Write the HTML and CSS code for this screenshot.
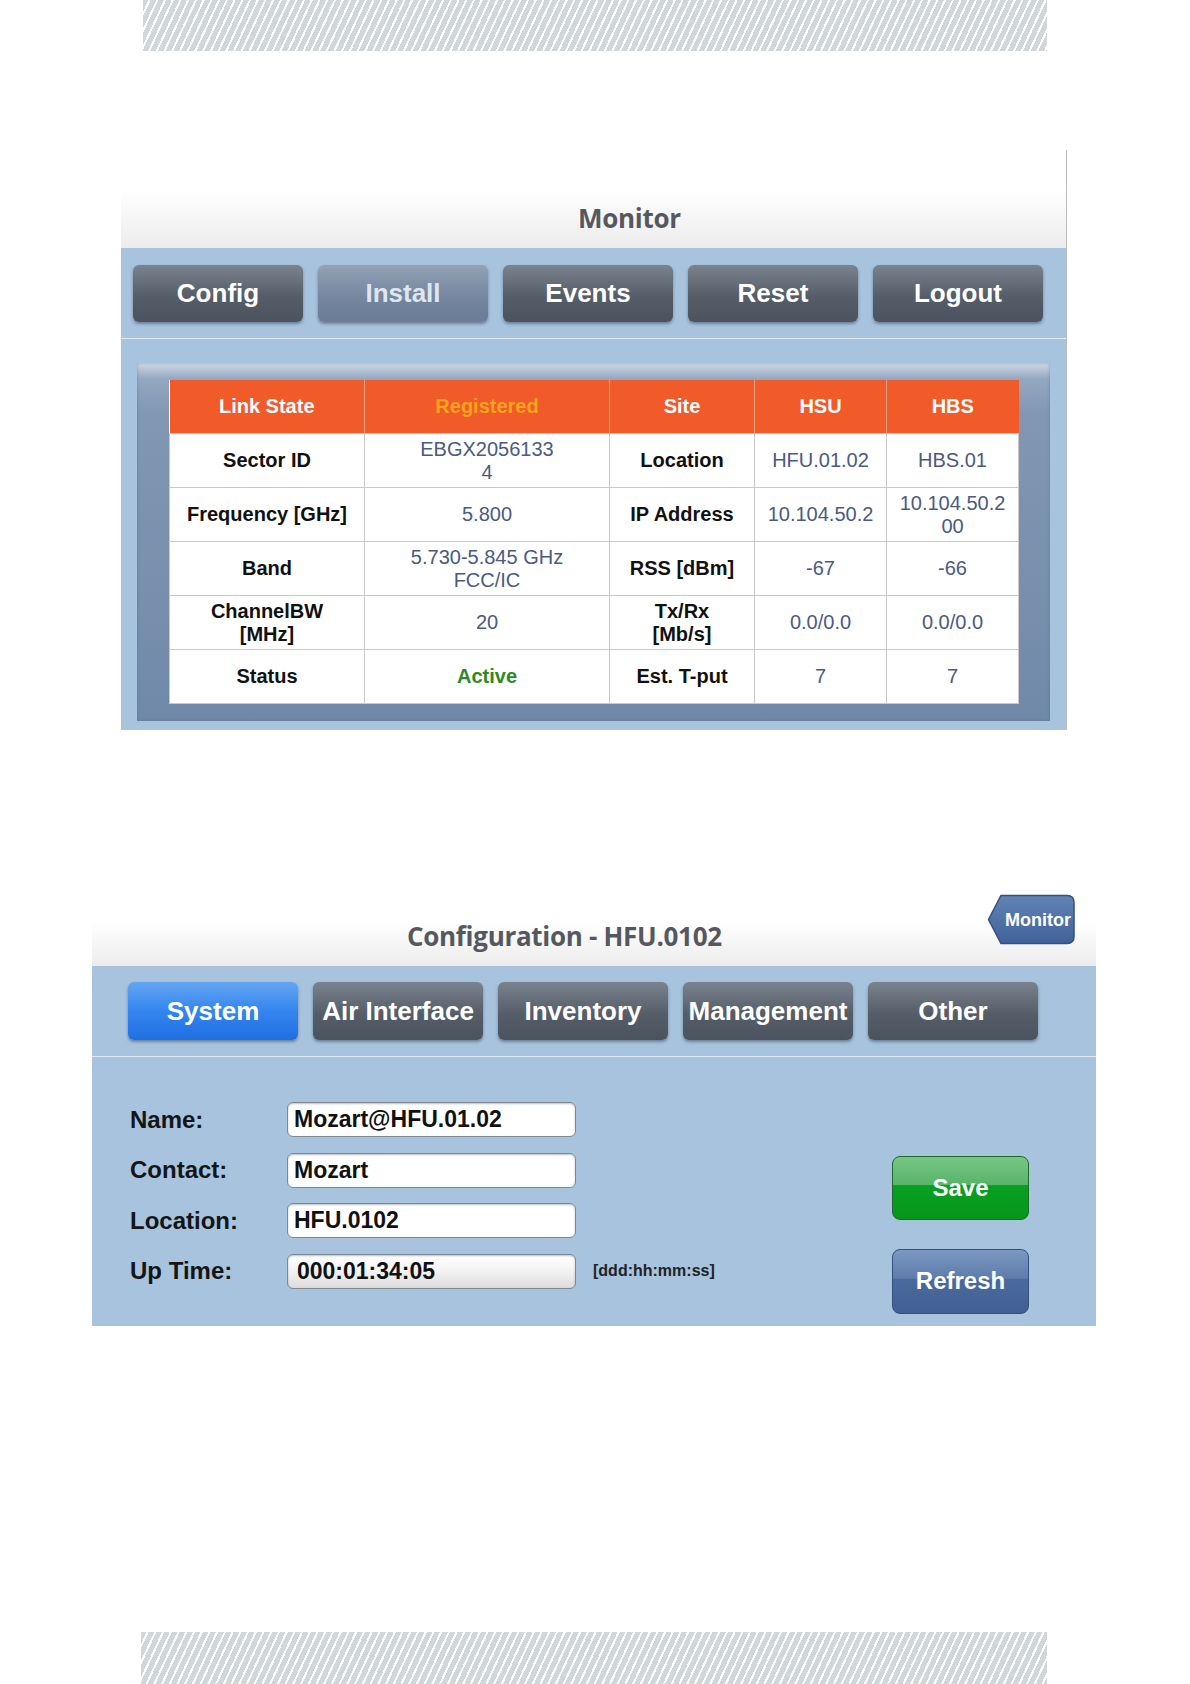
FILE: index.html
```html
<!DOCTYPE html>
<html lang="en">

<head>
  <meta charset="UTF-8">
  <meta name="viewport" content="width=device-width, initial-scale=1.0">
  <link rel="stylesheet" href="styles.css">
  <title>Monitor / Configuration</title>
</head>

<body>
  <div class="stripe top"></div>

  <section class="panel monitor">
    <header class="panel-head">
      <h1>Monitor</h1>
    </header>
    <nav class="tabs">
      <span class="tab">Config</span>
      <span class="tab off">Install</span>
      <span class="tab">Events</span>
      <span class="tab">Reset</span>
      <span class="tab">Logout</span>
    </nav>
    <div class="panel-body">
      <div class="frame">
        <table class="status">
          <colgroup>
            <col style="width:195px">
            <col style="width:245px">
            <col style="width:145px">
            <col style="width:132px">
            <col style="width:132px">
          </colgroup>
          <tr>
            <th>Link State</th>
            <th class="reg">Registered</th>
            <th>Site</th>
            <th>HSU</th>
            <th>HBS</th>
          </tr>
          <tr>
            <td class="key">Sector ID</td>
            <td>EBGX2056133<br>4</td>
            <td class="key">Location</td>
            <td>HFU.01.02</td>
            <td>HBS.01</td>
          </tr>
          <tr>
            <td class="key">Frequency [GHz]</td>
            <td>5.800</td>
            <td class="key">IP Address</td>
            <td>10.104.50.2</td>
            <td>10.104.50.2<br>00</td>
          </tr>
          <tr>
            <td class="key">Band</td>
            <td>5.730-5.845 GHz<br>FCC/IC</td>
            <td class="key">RSS [dBm]</td>
            <td>-67</td>
            <td>-66</td>
          </tr>
          <tr>
            <td class="key">ChannelBW<br>[MHz]</td>
            <td>20</td>
            <td class="key">Tx/Rx<br>[Mb/s]</td>
            <td>0.0/0.0</td>
            <td>0.0/0.0</td>
          </tr>
          <tr>
            <td class="key">Status</td>
            <td class="active">Active</td>
            <td class="key">Est. T-put</td>
            <td>7</td>
            <td>7</td>
          </tr>
        </table>
      </div>
    </div>
  </section>

  <section class="panel config">
    <header class="panel-head">
      <h1>Configuration - HFU.0102</h1>
      <a class="back">
        <svg width="89" height="53" viewBox="0 0 89 53">
          <defs>
            <linearGradient id="bk" x1="0" y1="0" x2="0" y2="1">
              <stop offset="0" stop-color="#6283b4"/>
              <stop offset="1" stop-color="#41629a"/>
            </linearGradient>
          </defs>
          <path d="M1.5 26.5 L14 2.5 H80 Q87 2.5 87 9.5 V43.5 Q87 50.5 80 50.5 H14 Z" fill="url(#bk)" stroke="#34507e" stroke-width="1.5"/>
          <text x="51" y="33" text-anchor="middle">Monitor</text>
        </svg>
      </a>
    </header>
    <nav class="tabs">
      <span class="tab on">System</span>
      <span class="tab">Air Interface</span>
      <span class="tab">Inventory</span>
      <span class="tab">Management</span>
      <span class="tab">Other</span>
    </nav>
    <div class="form-area">
      <div class="fields">
        <div class="field">
          <label>Name:</label>
          <input type="text" value="Mozart@HFU.01.02">
        </div>
        <div class="field">
          <label>Contact:</label>
          <input type="text" value="Mozart">
        </div>
        <div class="field">
          <label>Location:</label>
          <input type="text" value="HFU.0102">
        </div>
        <div class="field">
          <label>Up Time:</label>
          <input type="text" class="ro" value="000:01:34:05" readonly>
          <span class="hint">[ddd:hh:mm:ss]</span>
        </div>
      </div>
      <div class="actions">
        <span class="btn save">Save</span>
        <span class="btn refresh">Refresh</span>
      </div>
    </div>
  </section>

  <div class="stripe bottom"></div>
</body>

</html>
```

FILE: styles.css
```css
body {
  margin: 0;
  padding: 0;
  width: 1190px;
  height: 1684px;
  background: #fff;
  font-family: "Liberation Sans", Arial, sans-serif;
  overflow: hidden;
}

.stripe {
  background: repeating-linear-gradient(115deg, #d1d6d9 0 5px, #ffffff 5px 7px);
}

.stripe.top {
  margin-left: 143px;
  width: 904px;
  height: 51px;
}

.stripe.bottom {
  margin-top: 306px;
  margin-left: 141px;
  width: 906px;
  height: 52px;
}

/* panels */

.panel {
  background: #a7c3dd;
  box-sizing: border-box;
}

.panel-head {
  position: relative;
  display: flex;
  align-items: flex-end;
  background: linear-gradient(#ffffff 40%, #ececec);
}

.panel-head h1 {
  margin: 0;
  font-family: "Open Sans", sans-serif;
  font-weight: 700;
  font-size: 26px;
  color: #55595f;
  letter-spacing: -0.3px;
}

.monitor {
  margin-top: 99px;
  margin-left: 121px;
  width: 946px;
  border-right: 1px solid #b9bcc0;
}

.monitor .panel-head {
  height: 98px;
  padding-left: 457px;
  padding-bottom: 12px;
  box-sizing: border-box;
}

.config {
  margin-top: 163px;
  margin-left: 92px;
  width: 1004px;
}

.config .panel-head {
  height: 73px;
  padding-left: 315px;
  padding-bottom: 12px;
  box-sizing: border-box;
}

.back {
  position: absolute;
  right: 20px;
  top: 0;
  display: block;
}

.back svg {
  display: block;
}

.back text {
  font-family: "Liberation Sans", Arial, sans-serif;
  font-weight: 700;
  font-size: 18px;
  fill: #fff;
}

/* tab buttons */

.tabs {
  display: flex;
  gap: 15px;
  height: 91px;
  box-sizing: border-box;
  padding-top: 17px;
  padding-left: 12px;
  border-bottom: 1px solid #e2ecf5;
}

.config .tabs {
  padding-top: 16px;
  padding-left: 36px;
}

.tab {
  width: 170px;
  height: 57px;
  line-height: 57px;
  border-radius: 6px;
  text-align: center;
  font-weight: 700;
  font-size: 26px;
  color: #fff;
  background: linear-gradient(#7b838f, #555d69 55%, #4b535f);
  box-shadow: 0 2px 3px rgba(40, 50, 70, 0.45);
  white-space: nowrap;
}

.config .tab {
  height: 58px;
  line-height: 58px;
}

.tab.off {
  color: #dfe6ee;
  background: linear-gradient(#93a2b4, #7587a0 55%, #6b7d95);
}

.tab.on {
  background: linear-gradient(#64a6f4, #3385ee 50%, #1f6fe2);
}

/* monitor table */

.panel-body {
  padding: 24px 16px 9px;
}

.frame {
  padding: 17px 32px;
  background: linear-gradient(#cfd9e4, #93a7c0 16px, #8197b3 50px, #7189a9);
  box-shadow: inset 0 0 3px rgba(80, 100, 130, 0.5);
}

.status {
  width: 849px;
  border-collapse: collapse;
  table-layout: fixed;
  background: #fff;
  font-size: 20px;
}

.status th,
.status td {
  height: 53px;
  padding: 0;
  text-align: center;
  line-height: 23px;
}

.status th {
  background: #f15a29;
  color: #fff;
  font-weight: 700;
  border-left: 1px solid #f6a383;
}

.status th:first-child {
  border-left: 0;
}

.status th.reg {
  color: #fba41c;
}

.status td {
  border: 1px solid #c9c9c9;
  color: #4a5a82;
}

.status td.key {
  color: #111;
  font-weight: 700;
}

.status td.active {
  color: #2e8a1c;
  font-weight: 700;
}

/* configuration form */

.form-area {
  display: flex;
  height: 269px;
}

.fields {
  display: flex;
  flex-direction: column;
  gap: 15.5px;
  padding-top: 45px;
  padding-left: 38px;
}

.field {
  display: flex;
  align-items: center;
  height: 35px;
}

.field label {
  width: 157px;
  font-weight: 700;
  font-size: 24px;
  color: #151515;
}

.field input {
  width: 289px;
  height: 35px;
  box-sizing: border-box;
  padding: 0 6px;
  border: 1px solid #7f8790;
  border-radius: 6px;
  background: #fff;
  box-shadow: inset 0 1px 2px rgba(0, 0, 0, 0.25);
  font-family: "Liberation Sans", Arial, sans-serif;
  font-weight: 700;
  font-size: 23px;
  color: #111;
  outline: 0;
}

.field input.ro {
  padding-left: 9px;
  background: linear-gradient(#ffffff, #f2f2f2 50%, #dcdcdc);
}

.hint {
  margin-left: 17px;
  font-weight: 700;
  font-size: 16px;
  color: #222;
}

.actions {
  margin-left: auto;
  padding-top: 99px;
  padding-right: 67px;
  display: flex;
  flex-direction: column;
  gap: 29px;
}

.btn {
  width: 137px;
  height: 64px;
  line-height: 62px;
  box-sizing: border-box;
  border-radius: 8px;
  text-align: center;
  font-weight: 700;
  font-size: 24px;
  color: #fff;
}

.save {
  border: 1px solid #1c6a2a;
  background: linear-gradient(#78c786, #58b469 45%, #08a021 46%, #07961c);
}

.refresh {
  height: 65px;
  border: 1px solid #34507c;
  background: linear-gradient(#7c98c1, #5d7cab 45%, #4a6a9d 46%, #425f93);
}
```
